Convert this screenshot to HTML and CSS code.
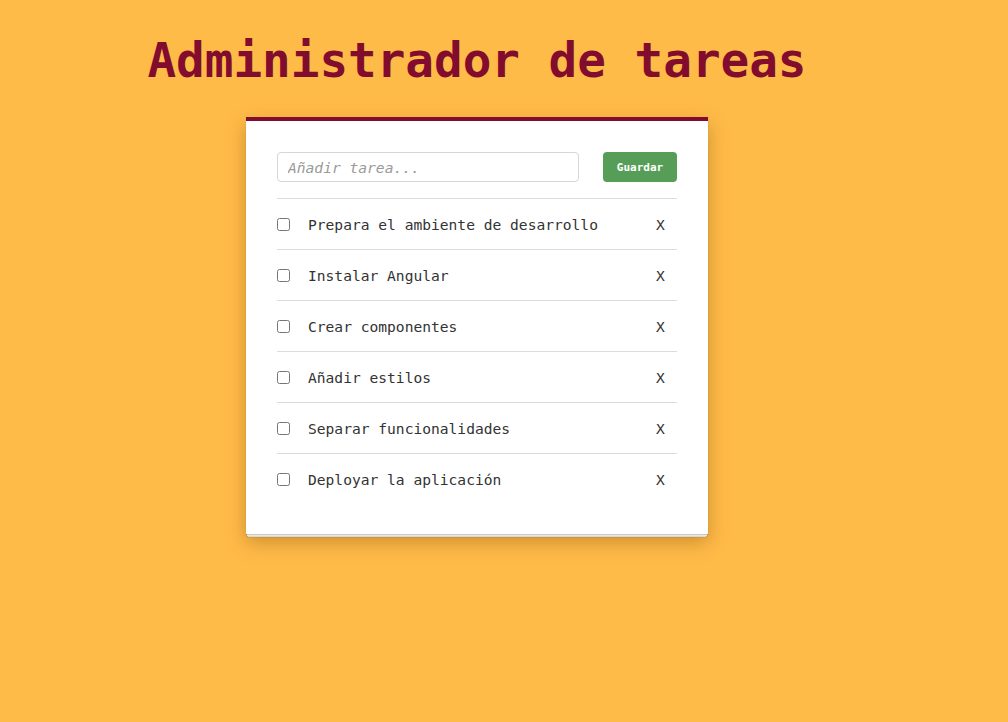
FILE: index.html
```html
<!DOCTYPE html>
<html lang="es">
<head>
<meta charset="utf-8">
<title>Administrador de tareas</title>
<link rel="stylesheet" href="styles.css">
</head>
<body>
<div class="app">
  <h1 class="title">Administrador de tareas</h1>
  <div class="card">
    <form class="add-form">
      <input class="add-input" type="text" placeholder="Añadir tarea...">
      <button class="add-btn" type="button">Guardar</button>
    </form>
    <ul class="tasks">
      <li class="task"><input type="checkbox" class="task-check"><span class="task-text">Prepara el ambiente de desarrollo</span><span class="task-del">X</span></li>
      <li class="task"><input type="checkbox" class="task-check"><span class="task-text">Instalar Angular</span><span class="task-del">X</span></li>
      <li class="task"><input type="checkbox" class="task-check"><span class="task-text">Crear componentes</span><span class="task-del">X</span></li>
      <li class="task"><input type="checkbox" class="task-check"><span class="task-text">Añadir estilos</span><span class="task-del">X</span></li>
      <li class="task"><input type="checkbox" class="task-check"><span class="task-text">Separar funcionalidades</span><span class="task-del">X</span></li>
      <li class="task"><input type="checkbox" class="task-check"><span class="task-text">Deployar la aplicación</span><span class="task-del">X</span></li>
    </ul>
  </div>
</div>
</body>
</html>
```

FILE: styles.css
```css
html, body {
  margin: 0;
  padding: 0;
  background: #ffbb48;
  height: 100%;
}
body {
  font-family: "DejaVu Sans Mono", "Liberation Mono", monospace;
}
.app {
  width: 954px;
  display: flex;
  flex-direction: column;
  align-items: center;
}
.title {
  margin: 30px 0 25px;
  font-size: 47.6px;
  line-height: 62px;
  color: #820c2e;
  font-weight: bold;
}
.card {
  width: 400px;
  background: #fff;
  border-top: 4px solid #820c2e;
  padding: 31px 31px 30px;
  box-shadow:
    0 1px 1px rgba(0,0,0,0.15),
    0 3px 0 -1px #eeeeee,
    0 3px 1px -1px rgba(0,0,0,0.3),
    0 5px 0 -2px #e4e4e4,
    0 5px 1px -2px rgba(0,0,0,0.25),
    0 8px 18px rgba(110,60,0,0.35);
}
.add-form {
  display: flex;
  justify-content: space-between;
  margin: 0;
  padding-bottom: 16px;
  border-bottom: 1px solid #dcdcdc;
}
.add-input {
  box-sizing: border-box;
  width: 302px;
  height: 30px;
  border: 1px solid #d6d6d6;
  border-radius: 4px;
  padding: 0 10px;
  font-family: inherit;
  font-size: 14.6px;
  font-style: italic;
  color: #333;
  outline: none;
}
.add-input::placeholder {
  color: #9a9a9a;
}
.add-btn {
  width: 74px;
  height: 30px;
  border: none;
  border-radius: 4px;
  background: #569e58;
  color: #fff;
  font-family: inherit;
  font-size: 11px;
  font-weight: bold;
  padding: 0;
}
.tasks {
  list-style: none;
  margin: 0;
  padding: 0;
}
.task {
  display: flex;
  align-items: center;
  height: 50px;
  border-bottom: 1px solid #dcdcdc;
  font-size: 14.6px;
  color: #333;
}
.task:last-child {
  border-bottom: none;
}
.task-check {
  margin: 0 18px 0 0;
  width: 13px;
  height: 13px;
}
.task-text {
  flex: 1;
}
.task-del {
  width: 21px;
  color: #333;
}
```
